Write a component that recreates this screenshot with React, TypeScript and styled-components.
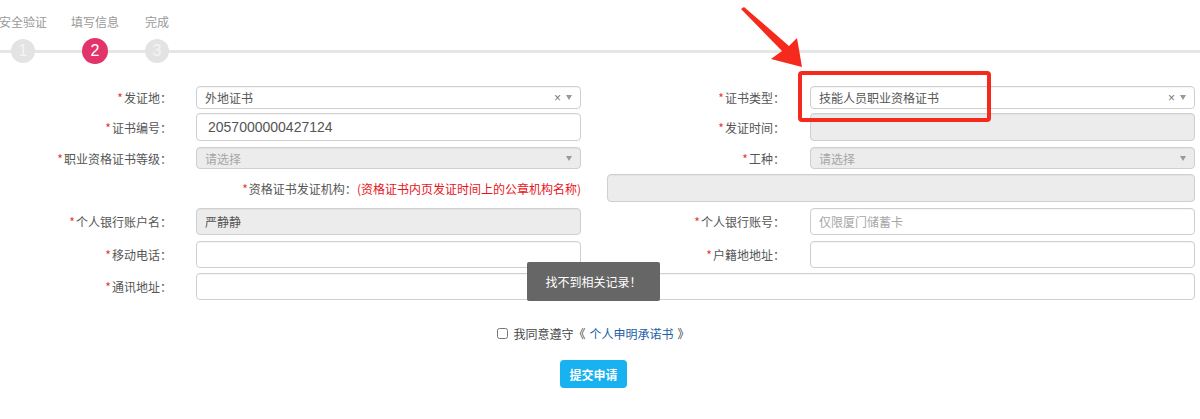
import { FC, ReactNode } from 'react';
import styled, { createGlobalStyle } from 'styled-components';

const GlobalStyle = createGlobalStyle`
  html, body {
    margin: 0;
    padding: 0;
    background: #ffffff;
  }
  body {
    font-family: "Noto Sans CJK SC", "Noto Sans", "Liberation Sans", sans-serif;
    font-size: 12px;
    color: #333;
  }
`;

const COLS = '196px 385px 229px 385px';

type FieldProps = {
  label: string;
  h: number;
  side?: 'left' | 'right';
};

const Field: FC<FieldProps> = ({ label, h, side = 'left' }) => (
  <Label $h={h} $side={side}>
    <Star>*</Star>
    {label}：
  </Label>
);

const SelectBox: FC<{ h: number; value?: string; placeholder?: string; disabled?: boolean; clear?: boolean }> = ({
  h,
  value,
  placeholder,
  disabled,
  clear,
}) => (
  <Control $h={h} $disabled={disabled}>
    {value ? <Value>{value}</Value> : <Placeholder>{placeholder}</Placeholder>}
    <Icons>
      {clear && <Clear>×</Clear>}
      <Caret />
    </Icons>
  </Control>
);

const Step: FC<{ n: number; label: string; active?: boolean }> = ({ n, label, active }) => (
  <StepItem>
    <StepLabel>{label}</StepLabel>
    <StepTrack>
      <Circle $active={active}>{n}</Circle>
    </StepTrack>
  </StepItem>
);

const Row: FC<{ pitch: number; children: ReactNode }> = ({ pitch, children }) => (
  <RowGrid $pitch={pitch}>{children}</RowGrid>
);

const App: FC = () => {
  return (
    <Page>
      <GlobalStyle />
      <Steps>
        <Step n={1} label="安全验证" />
        <Connector $w={26} />
        <Step n={2} label="填写信息" active />
        <Connector $w={16} />
        <Step n={3} label="完成" />
        <Connector $grow />
      </Steps>

      <Form>
        <Row pitch={27}>
          <Field label="发证地" h={23} />
          <SelectBox h={23} value="外地证书" clear />
          <Field label="证书类型" h={23} side="right" />
          <SelectBox h={23} value="技能人员职业资格证书" clear />
        </Row>
        <Row pitch={34}>
          <Field label="证书编号" h={28} />
          <Control $h={28}>
            <Number>2057000000427124</Number>
          </Control>
          <Field label="发证时间" h={28} side="right" />
          <Control $h={28} $disabled />
        </Row>
        <Row pitch={27}>
          <Field label="职业资格证书等级" h={22} />
          <SelectBox h={22} placeholder="请选择" disabled />
          <Field label="工种" h={22} side="right" />
          <SelectBox h={22} placeholder="请选择" disabled />
        </Row>
        <Row pitch={34}>
          <WideLabel $h={28}>
            <Star>*</Star>
            资格证书发证机构：<Hint>(资格证书内页发证时间上的公章机构名称)</Hint>
          </WideLabel>
          <WideControl $h={28} $disabled />
        </Row>
        <Row pitch={33}>
          <Field label="个人银行账户名" h={27} />
          <Control $h={27} $disabled>
            <Value>严静静</Value>
          </Control>
          <Field label="个人银行账号" h={27} side="right" />
          <Control $h={27}>
            <Placeholder>仅限厦门储蓄卡</Placeholder>
          </Control>
        </Row>
        <Row pitch={32}>
          <Field label="移动电话" h={27} />
          <Control $h={27} />
          <Field label="户籍地地址" h={27} side="right" />
          <Control $h={27} />
        </Row>
        <Row pitch={27}>
          <Field label="通讯地址" h={27} />
          <AddressControl $h={27} />
        </Row>
      </Form>

      <Footer>
        <Agree>
          <Check type="checkbox" />
          我同意遵守《 <Link>个人申明承诺书</Link> 》
        </Agree>
        <Submit>提交申请</Submit>
      </Footer>

      <Toast>找不到相关记录！</Toast>

      <Annotation width="1200" height="419" viewBox="0 0 1200 419">
        <polygon
          points="741,9 744,7 789,46 797,38 802,67 771,59 782,51"
          fill="#f52a1c"
        />
        <rect x="800" y="73" width="189" height="47" rx="2" fill="none" stroke="#f52a1c" strokeWidth="4" />
      </Annotation>
    </Page>
  );
};

export default App;

const Page = styled.div`
  position: relative;
  width: 1200px;
  height: 419px;
  overflow: hidden;
`;

const Steps = styled.div`
  display: flex;
  align-items: flex-end;
  padding-top: 14px;
`;

const StepItem = styled.div`
  width: 46px;
  display: flex;
  flex-direction: column;
  align-items: center;
`;

const StepLabel = styled.div`
  height: 16px;
  line-height: 16px;
  font-size: 12px;
  color: #999;
  white-space: nowrap;
  margin-bottom: 9px;
`;

const StepTrack = styled.div`
  width: 100%;
  display: flex;
  justify-content: center;
  background: linear-gradient(#e6e6e6, #e6e6e6) center / 100% 3px no-repeat;
`;

const Circle = styled.div<{ $active?: boolean }>`
  width: ${p => (p.$active ? 26 : 24)}px;
  height: ${p => (p.$active ? 26 : 24)}px;
  margin: ${p => (p.$active ? '-1px 0' : '0')};
  border-radius: 50%;
  background: ${p => (p.$active ? '#e2336a' : '#e3e3e3')};
  color: ${p => (p.$active ? '#fff' : '#f4f4f4')};
  font-family: "Liberation Sans", sans-serif;
  font-size: 16px;
  display: flex;
  align-items: center;
  justify-content: center;
`;

const Connector = styled.div<{ $w?: number; $grow?: boolean }>`
  ${p => (p.$grow ? 'flex: 1;' : `width: ${p.$w}px;`)}
  height: 3px;
  background: #e6e6e6;
  margin-bottom: 10.5px;
`;

const Form = styled.div`
  margin-top: 23px;
  width: 1195px;
`;

const RowGrid = styled.div<{ $pitch: number }>`
  display: grid;
  grid-template-columns: ${COLS};
  align-items: start;
  height: ${p => p.$pitch}px;
`;

const Label = styled.div<{ $h: number; $side: 'left' | 'right' }>`
  height: ${p => p.$h}px;
  display: flex;
  align-items: center;
  justify-content: flex-end;
  padding-right: ${p => (p.$side === 'left' ? 24 : 25)}px;
  font-size: 12px;
  color: #555;
  white-space: nowrap;
`;

const WideLabel = styled.div<{ $h: number }>`
  grid-column: 1 / 3;
  height: ${p => p.$h}px;
  display: flex;
  align-items: center;
  justify-content: flex-end;
  font-size: 12px;
  color: #555;
  white-space: nowrap;
`;

const Star = styled.span`
  color: #e8392f;
  margin-right: 1px;
`;

const Hint = styled.span`
  color: #e8141b;
`;

const Control = styled.div<{ $h: number; $disabled?: boolean }>`
  box-sizing: border-box;
  height: ${p => p.$h}px;
  border: 1px solid #cfcfcf;
  border-radius: 4px;
  background: ${p => (p.$disabled ? '#ececec' : '#fff')};
  display: flex;
  align-items: center;
  padding: 0 8px;
  font-size: 12px;
  color: #555;
  box-shadow: inset 0 1px 1px rgba(0, 0, 0, 0.04);
`;

const WideControl = styled(Control)`
  grid-column: 3 / 5;
  margin-left: 26px;
`;

const AddressControl = styled(Control)`
  grid-column: 2 / 5;
`;

const Value = styled.span`
  flex: 1;
  color: #555;
`;

const Number = styled.span`
  font-family: "Liberation Sans", sans-serif;
  font-size: 14px;
  color: #555;
  padding-left: 3px;
`;

const Placeholder = styled.span`
  flex: 1;
  color: #a6a6a6;
`;

const Icons = styled.div`
  display: flex;
  align-items: center;
  gap: 5px;
  margin-left: auto;
`;

const Clear = styled.span`
  font-family: "Liberation Sans", sans-serif;
  font-size: 12px;
  color: #777;
  line-height: 1;
`;

const Caret = styled.span`
  width: 0;
  height: 0;
  border-left: 3.5px solid transparent;
  border-right: 3.5px solid transparent;
  border-top: 5px solid #999;
`;

const Footer = styled.div`
  width: 1187px;
  margin-top: 25px;
  display: flex;
  flex-direction: column;
  align-items: center;
`;

const Agree = styled.label`
  display: flex;
  align-items: center;
  font-size: 12px;
  color: #444;
  height: 16px;
`;

const Check = styled.input`
  width: 11px;
  height: 11px;
  margin: 0 5px 0 0;
  accent-color: #999;
`;

const Link = styled.span`
  color: #1d5ea8;
  margin: 0 4px;
`;

const Submit = styled.button`
  margin-top: 19px;
  width: 67px;
  height: 28px;
  border: none;
  border-radius: 4px;
  background: #17b2ef;
  color: #fff;
  font-family: "Noto Sans CJK SC", sans-serif;
  font-size: 12px;
  font-weight: 700;
  padding: 0;
`;

const Toast = styled.div`
  position: absolute;
  left: 527px;
  top: 262px;
  width: 133px;
  height: 39px;
  background: #666;
  border-radius: 2px;
  color: #fff;
  font-size: 12px;
  display: flex;
  align-items: center;
  justify-content: center;
`;

const Annotation = styled.svg`
  position: absolute;
  left: 0;
  top: 0;
  pointer-events: none;
`;
